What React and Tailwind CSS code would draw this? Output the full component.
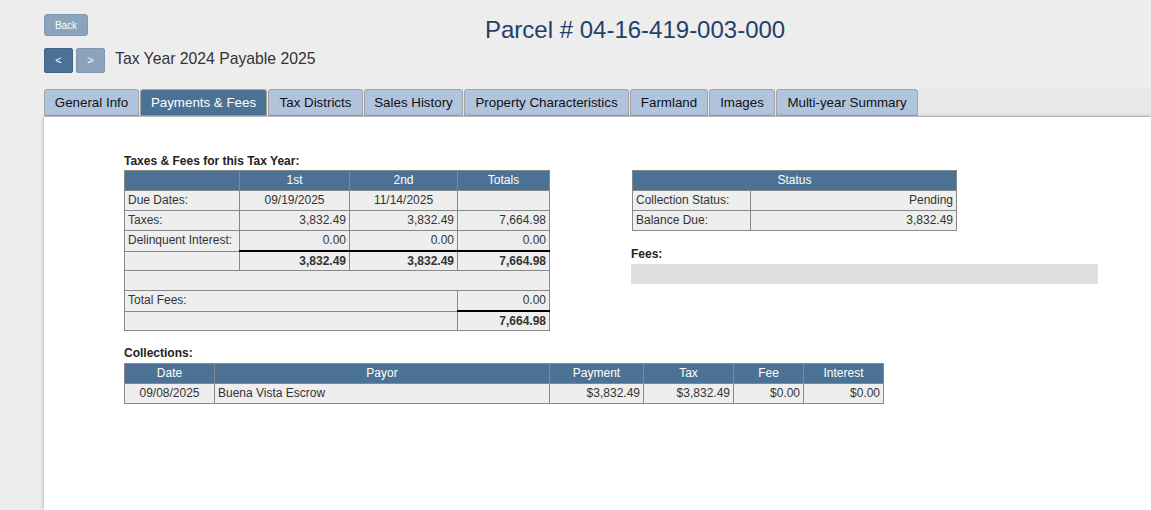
import React from "react";

const FONT = { fontFamily: '"Liberation Sans", Arial, sans-serif' };

const th = "border border-[#888] bg-[#4b7294] text-white font-normal text-center leading-[19px] p-0 text-[12px]";
const td = "border border-[#888] bg-[#eeeeee] leading-[19px] py-0 px-[3px] text-[12px] text-[#333]";
const tdThick = "border border-[#888] bg-[#eeeeee] leading-[18px] py-0 px-[3px] text-[12px] text-[#333] text-right font-bold border-t-2 border-t-black";

function Tabs() {
  const tabs = [
    { t: "General Info", w: "w-[95px]" },
    { t: "Payments & Fees", w: "w-[127px]" },
    { t: "Tax Districts", w: "w-[95px]" },
    { t: "Sales History", w: "w-[99px]" },
    { t: "Property Characteristics", w: "w-[165px]" },
    { t: "Farmland", w: "w-[78px]" },
    { t: "Images", w: "w-[66px]" },
    { t: "Multi-year Summary", w: "w-[142px]" },
  ];
  return (
    <div className="ml-[44px] mt-[16px] flex items-start gap-[1px] bg-[#e8e8e8] h-[28px] border-b border-[#d2d2d2]">
      {tabs.map(({ t, w }) => {
        const active = t === "Payments & Fees";
        return (
          <div
            key={t}
            className={
              w +
              " shrink-0 h-[27px] flex items-center justify-center text-[13.33px] border border-[#a3a3a3] rounded-t-[3px] whitespace-nowrap " +
              (active ? "bg-[#4b7294] text-white" : "bg-[#b0c4de] text-[#111]")
            }
          >
            {t}
          </div>
        );
      })}
    </div>
  );
}

function TaxesTable() {
  return (
    <table className="table-fixed border-collapse w-[425px]">
      <colgroup>
        <col className="w-[115px]" />
        <col className="w-[110px]" />
        <col className="w-[108px]" />
        <col className="w-[92px]" />
      </colgroup>
      <thead>
        <tr>
          <th className={th}></th>
          <th className={th}>1st</th>
          <th className={th}>2nd</th>
          <th className={th}>Totals</th>
        </tr>
      </thead>
      <tbody>
        <tr>
          <td className={td}>Due Dates:</td>
          <td className={td + " text-center"}>09/19/2025</td>
          <td className={td + " text-center"}>11/14/2025</td>
          <td className={td}></td>
        </tr>
        <tr>
          <td className={td}>Taxes:</td>
          <td className={td + " text-right"}>3,832.49</td>
          <td className={td + " text-right"}>3,832.49</td>
          <td className={td + " text-right"}>7,664.98</td>
        </tr>
        <tr>
          <td className={td}>Delinquent Interest:</td>
          <td className={td + " text-right"}>0.00</td>
          <td className={td + " text-right"}>0.00</td>
          <td className={td + " text-right"}>0.00</td>
        </tr>
        <tr>
          <td className={td + " leading-[18px]"}></td>
          <td className={tdThick}>3,832.49</td>
          <td className={tdThick}>3,832.49</td>
          <td className={tdThick}>7,664.98</td>
        </tr>
        <tr>
          <td className={td} colSpan={4}>&nbsp;</td>
        </tr>
        <tr>
          <td className={td} colSpan={3}>Total Fees:</td>
          <td className={td + " text-right"}>0.00</td>
        </tr>
        <tr>
          <td className={td + " leading-[18px]"} colSpan={3}></td>
          <td className={tdThick}>7,664.98</td>
        </tr>
      </tbody>
    </table>
  );
}

function StatusTable() {
  return (
    <table className="table-fixed border-collapse w-[324px]">
      <colgroup>
        <col className="w-[118px]" />
        <col className="w-[206px]" />
      </colgroup>
      <thead>
        <tr>
          <th className={th} colSpan={2}>Status</th>
        </tr>
      </thead>
      <tbody>
        <tr>
          <td className={td}>Collection Status:</td>
          <td className={td + " text-right bg-[#64b1f1]"}>Pending</td>
        </tr>
        <tr>
          <td className={td}>Balance Due:</td>
          <td className={td + " text-right"}>3,832.49</td>
        </tr>
      </tbody>
    </table>
  );
}

function CollectionsTable() {
  return (
    <table className="table-fixed border-collapse w-[759px]">
      <colgroup>
        <col className="w-[90px]" />
        <col className="w-[335px]" />
        <col className="w-[94px]" />
        <col className="w-[90px]" />
        <col className="w-[70px]" />
        <col className="w-[80px]" />
      </colgroup>
      <thead>
        <tr>
          <th className={th}>Date</th>
          <th className={th}>Payor</th>
          <th className={th}>Payment</th>
          <th className={th}>Tax</th>
          <th className={th}>Fee</th>
          <th className={th}>Interest</th>
        </tr>
      </thead>
      <tbody>
        <tr>
          <td className={td + " text-center"}>09/08/2025</td>
          <td className={td}>Buena Vista Escrow</td>
          <td className={td + " text-right"}>$3,832.49</td>
          <td className={td + " text-right"}>$3,832.49</td>
          <td className={td + " text-right"}>$0.00</td>
          <td className={td + " text-right"}>$0.00</td>
        </tr>
      </tbody>
    </table>
  );
}

export default function App() {
  return (
    <div style={FONT} className="min-h-screen h-[510px] overflow-hidden bg-[#ededed] flex flex-col text-[#333]">
      <div className="pt-[14px] pl-[44px] flex">
        <div className="w-[441px]">
          <button className="h-[22px] w-[44px] rounded-[3px] bg-[#8ba4bb] border border-[#7f99b2] text-white text-[10px] flex items-center justify-center">
            Back
          </button>
          <div className="mt-[12px] flex items-center">
            <button className="h-[25px] w-[29px] rounded-[2px] bg-[#4b7194] border border-[#3f6486] text-white text-[11px] flex items-center justify-center">
              &lt;
            </button>
            <button className="ml-[3px] h-[25px] w-[29px] rounded-[2px] bg-[#8ba4bb] border border-[#7f99b2] text-white text-[11px] flex items-center justify-center">
              &gt;
            </button>
            <span className="ml-[10px] mb-[4px] text-[15.75px] leading-[18px] text-[#333]">
              Tax Year 2024 Payable 2025
            </span>
          </div>
        </div>
        <h1 className="mt-[1px] text-[24px] leading-[30px] text-[#24406a] font-normal whitespace-nowrap">
          Parcel # 04-16-419-003-000
        </h1>
      </div>

      <Tabs />

      <div className="ml-[44px] flex-1 bg-white shadow-[0_0_4px_rgba(0,0,0,0.3)] pt-[37px] pl-[80px]">
        <div className="flex items-start">
          <div>
            <div className="text-[12px] leading-[14px] font-bold text-[#222] mb-[2px]">
              Taxes &amp; Fees for this Tax Year:
            </div>
            <TaxesTable />
          </div>
          <div className="ml-[82px] mt-[16px]">
            <StatusTable />
            <div className="mt-[16px] -ml-[1px] text-[12px] leading-[14px] font-bold text-[#222] mb-[3px]">
              Fees:
            </div>
            <div className="-ml-[1px] w-[467px] h-[20px] bg-[#dfdfdf]"></div>
          </div>
        </div>
        <div className="mt-[15px] text-[12px] leading-[14px] font-bold text-[#222] mb-[3px]">
          Collections:
        </div>
        <CollectionsTable />
      </div>
    </div>
  );
}
